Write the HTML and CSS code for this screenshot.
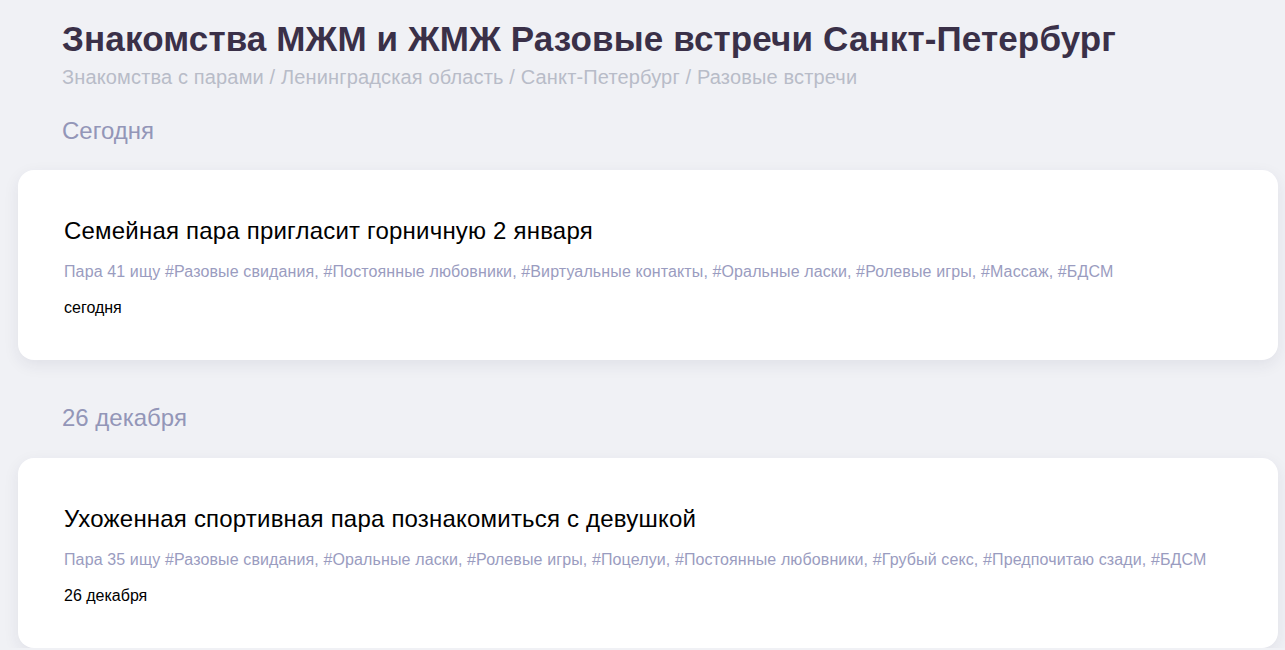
FILE: index.html
```html
<!DOCTYPE html>
<html lang="ru">
<head>
<meta charset="utf-8">
<title>Знакомства МЖМ и ЖМЖ Разовые встречи Санкт-Петербург</title>
<link rel="stylesheet" href="styles.css">
</head>
<body>
<div class="page">
  <header class="head">
    <h1 class="title">Знакомства МЖМ и ЖМЖ Разовые встречи Санкт-Петербург</h1>
    <div class="crumbs">Знакомства с парами / Ленинградская область / Санкт-Петербург / Разовые встречи</div>
  </header>

  <section class="group">
    <h2 class="day">Сегодня</h2>
    <article class="card">
      <h3 class="card-title">Семейная пара пригласит горничную 2 января</h3>
      <p class="tags">Пара 41 ищу #Разовые свидания, #Постоянные любовники, #Виртуальные контакты, #Оральные ласки, #Ролевые игры, #Массаж, #БДСМ</p>
      <p class="date">сегодня</p>
    </article>
  </section>

  <section class="group">
    <h2 class="day">26 декабря</h2>
    <article class="card">
      <h3 class="card-title">Ухоженная спортивная пара познакомиться с девушкой</h3>
      <p class="tags">Пара 35 ищу #Разовые свидания, #Оральные ласки, #Ролевые игры, #Поцелуи, #Постоянные любовники, #Грубый секс, #Предпочитаю сзади, #БДСМ</p>
      <p class="date">26 декабря</p>
    </article>
  </section>
</div>
</body>
</html>
```

FILE: styles.css
```css
html, body {
  margin: 0;
  padding: 0;
  background: #f0f1f5;
}
body {
  font-family: "Liberation Sans", Arial, sans-serif;
}
.page {
  padding: 18px 7px 0 18px;
}
.head {
  padding-left: 44px;
}
.title {
  margin: 0;
  font-weight: 700;
  font-size: 35px;
  line-height: 42px;
  letter-spacing: 0.14px;
  color: #3a3048;
}
.crumbs {
  margin-top: 6px;
  font-size: 20px;
  line-height: 22px;
  letter-spacing: 0.15px;
  color: #b8bcc8;
}
.day {
  margin: 0;
  padding-left: 44px;
  font-weight: 400;
  font-size: 24px;
  line-height: 26px;
  color: #9396b8;
}
.group {
  padding-top: 30px;
}
.group + .group {
  padding-top: 45px;
}
.card {
  margin-top: 26px;
  background: #fff;
  border-radius: 16px;
  box-shadow: 0 5px 16px rgba(40, 40, 80, 0.08);
  padding: 47px 46px 43px;
}
.group + .group .card {
  margin-top: 27px;
}
.card-title {
  margin: 0;
  font-weight: 400;
  font-size: 24px;
  line-height: 28px;
  letter-spacing: 0.2px;
  color: #000;
}
.tags {
  margin: 18px 0 0;
  font-size: 16px;
  line-height: 18px;
  letter-spacing: 0.12px;
  color: #9a9cc0;
}
.date {
  margin: 18px 0 0;
  font-size: 16px;
  line-height: 18px;
  color: #000;
}
```
